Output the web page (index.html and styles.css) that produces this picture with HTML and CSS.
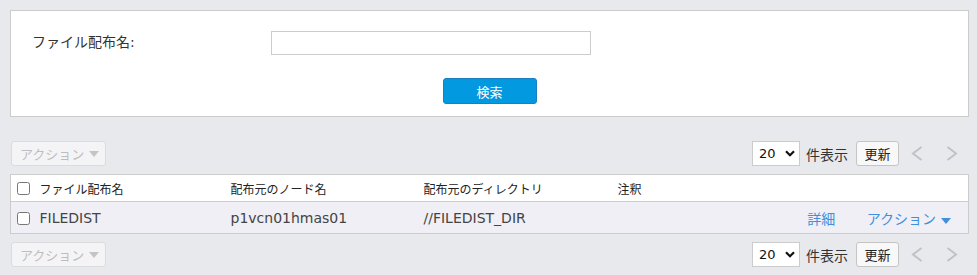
FILE: index.html
```html
<!DOCTYPE html>
<html lang="ja">
<head>
    <meta charset="UTF-8">
    <title>ファイル配布</title>
    <link rel="stylesheet" href="styles.css">
</head>
<body>
    <section class="search-panel">
        <div class="search-row">
            <label class="search-label" for="dist-name">ファイル配布名:</label>
            <input class="search-input" id="dist-name" type="text">
        </div>
        <div class="search-actions">
            <button class="btn-primary" type="button">検索</button>
        </div>
    </section>

    <div class="toolbar">
        <button class="btn-action" type="button" disabled>アクション<span class="caret"></span></button>
        <div class="pager">
            <span class="page-size">20
                <svg width="10" height="7" viewBox="0 0 10 7"><path d="M1 1.2 L5 5.2 L9 1.2" fill="none" stroke="#111" stroke-width="2.2"/></svg>
            </span>
            <span class="page-label">件表示</span>
            <button class="btn-default" type="button">更新</button>
            <a class="page-arrow" href="javascript:;"><svg width="12" height="15" viewBox="0 0 12 15"><path d="M10.5 1 L2 7.5 L10.5 14" fill="none" stroke="#c2c2c2" stroke-width="2"/></svg></a>
            <a class="page-arrow" href="javascript:;"><svg width="12" height="15" viewBox="0 0 12 15"><path d="M1.5 1 L10 7.5 L1.5 14" fill="none" stroke="#c2c2c2" stroke-width="2"/></svg></a>
        </div>
    </div>

    <table class="list">
        <thead>
            <tr>
                <th class="col-check"><input type="checkbox"></th>
                <th class="col-name">ファイル配布名</th>
                <th class="col-node">配布元のノード名</th>
                <th class="col-dir">配布元のディレクトリ</th>
                <th class="col-note">注釈</th>
                <th class="col-ops"></th>
            </tr>
        </thead>
        <tbody>
            <tr>
                <td class="col-check"><input type="checkbox"></td>
                <td>FILEDIST</td>
                <td>p1vcn01hmas01</td>
                <td>//FILEDIST_DIR</td>
                <td></td>
                <td class="col-ops">
                    <a class="link" href="javascript:;">詳細</a>
                    <a class="link link-action" href="javascript:;">アクション<span class="caret caret-blue"></span></a>
                </td>
            </tr>
        </tbody>
    </table>

    <div class="toolbar">
        <button class="btn-action" type="button" disabled>アクション<span class="caret"></span></button>
        <div class="pager">
            <span class="page-size">20
                <svg width="10" height="7" viewBox="0 0 10 7"><path d="M1 1.2 L5 5.2 L9 1.2" fill="none" stroke="#111" stroke-width="2.2"/></svg>
            </span>
            <span class="page-label">件表示</span>
            <button class="btn-default" type="button">更新</button>
            <a class="page-arrow" href="javascript:;"><svg width="12" height="15" viewBox="0 0 12 15"><path d="M10.5 1 L2 7.5 L10.5 14" fill="none" stroke="#c2c2c2" stroke-width="2"/></svg></a>
            <a class="page-arrow" href="javascript:;"><svg width="12" height="15" viewBox="0 0 12 15"><path d="M1.5 1 L10 7.5 L1.5 14" fill="none" stroke="#c2c2c2" stroke-width="2"/></svg></a>
        </div>
    </div>
</body>
</html>
```

FILE: styles.css
```css
* {
    padding: 0;
    margin: 0;
    box-sizing: border-box;
}

body {
    background: #e8e9ed;
    padding: 10px 8px 10px 10px;
    font-family: "DejaVu Sans", "Noto Sans CJK JP", sans-serif;
    font-size: 14px;
    color: #333;
}

.search-panel {
    background: #fff;
    border: solid 1px #ccc;
    height: 107px;
}

.search-row {
    display: flex;
    align-items: center;
    padding: 20px 0 0 21px;
}

.search-label {
    width: 239px;
    font-size: 14px;
    color: #333;
    margin-top: -5px;
}

.search-input {
    width: 320px;
    height: 24px;
    border: solid 1px #ccc;
    background: #fff;
}

.search-actions {
    display: flex;
    justify-content: center;
    margin-top: 23px;
}

.btn-primary {
    width: 94px;
    height: 26px;
    background: #0399e1;
    border: solid 1px #1a7fc0;
    border-radius: 3px;
    color: #fff;
    font-family: inherit;
    font-size: 13px;
}

.toolbar {
    display: flex;
    justify-content: space-between;
    align-items: center;
    margin-top: 24px;
    padding-left: 1px;
    height: 25px;
}

.toolbar:last-child {
    margin-top: 8px;
}

.btn-action {
    width: 95px;
    height: 25px;
    background: #f4f4f6;
    border: solid 1px #dcdcde;
    border-radius: 3px;
    color: #bdbdbd;
    font-family: inherit;
    font-size: 13px;
    display: flex;
    align-items: center;
    padding-left: 8px;
}

.caret {
    display: inline-block;
    margin-left: 5px;
    border-left: 5px solid transparent;
    border-right: 5px solid transparent;
    border-top: 6px solid #c4c4c4;
}

.caret-blue {
    border-top-color: #3f8fdc;
}

.pager {
    display: flex;
    align-items: center;
    height: 25px;
}

.page-size {
    display: flex;
    align-items: center;
    justify-content: space-between;
    width: 48px;
    height: 25px;
    background: #fff;
    border: solid 1px #ccc;
    padding: 0 4px 0 6px;
    font-size: 13px;
    color: #111;
}

.page-label {
    margin-left: 6px;
    font-size: 14px;
    color: #333;
}

.btn-default {
    margin-left: 8px;
    width: 43px;
    height: 25px;
    background: #f8f8f8;
    border: solid 1px #c4c4c4;
    border-radius: 3px;
    font-family: inherit;
    font-size: 13px;
    color: #222;
}

.page-arrow {
    display: flex;
    align-items: center;
    justify-content: center;
    width: 35px;
    height: 25px;
}

.list {
    width: 959px;
    margin-top: 8px;
    border-collapse: collapse;
    border: solid 1px #ccc;
    table-layout: fixed;
}

.list th {
    background: #fff;
    height: 27px;
    font-size: 12px;
    font-weight: normal;
    color: #222;
    text-align: left;
    border-bottom: solid 1px #ccc;
}

.list td {
    background: #efeff5;
    height: 32px;
    font-size: 14px;
    color: #444;
}

.list input[type="checkbox"] {
    width: 13px;
    height: 13px;
    margin: 0 0 0 6px;
    vertical-align: middle;
}

.col-check {
    width: 29px;
}

.col-name {
    width: 191px;
}

.col-node {
    width: 193px;
}

.col-dir {
    width: 194px;
}

.col-ops {
    width: 200px;
    text-align: right;
    padding-right: 17px;
}

.link {
    color: #3f8fdc;
    text-decoration: none;
}

.link-action {
    margin-left: 27px;
}
```
